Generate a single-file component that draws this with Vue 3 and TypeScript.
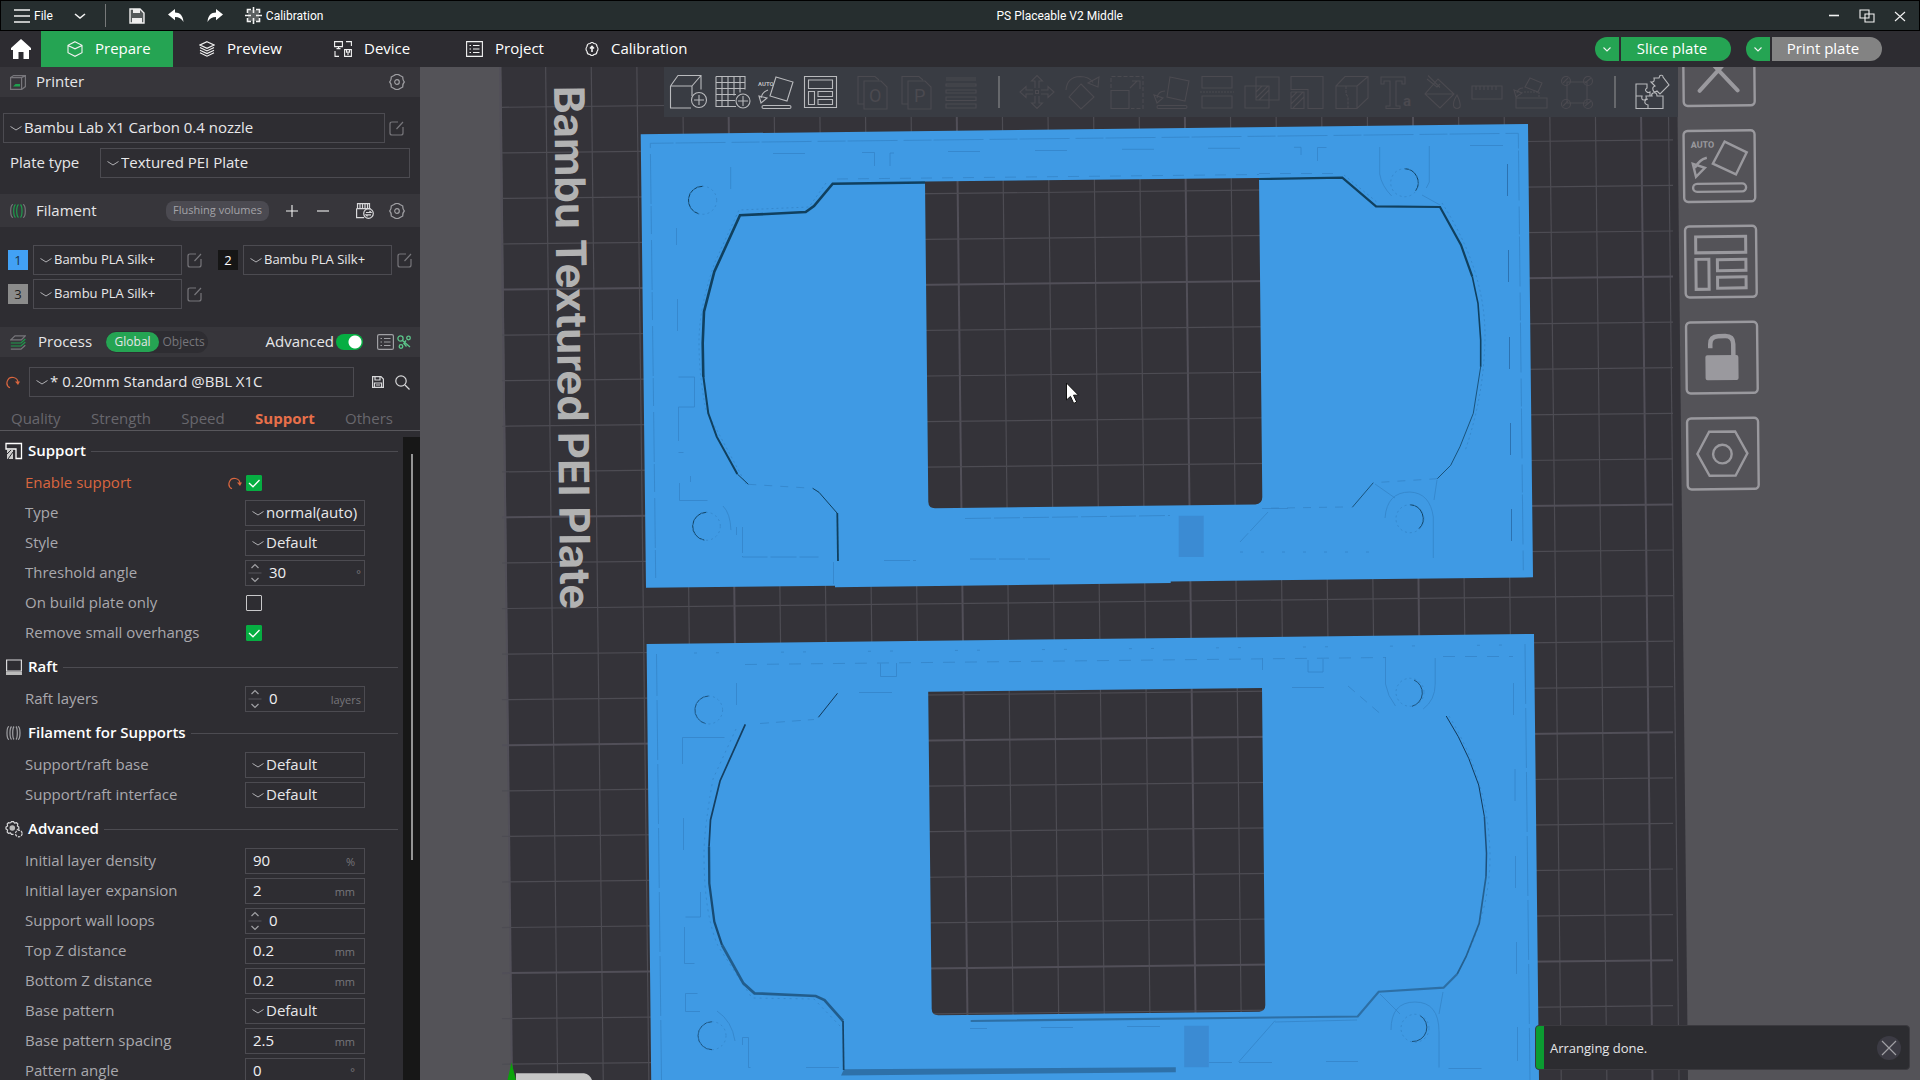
<script setup lang="ts">
import { ref } from 'vue'

interface Tab { id: string; label: string; width: number }
interface Filament { id: number; color: string; ink: string; name: string }
interface Field {
  key: string
  label: string
  kind: 'check' | 'select' | 'spin' | 'text'
  value: string
  unit?: string
  on?: boolean
  changed?: boolean
}
interface Section { id: string; title: string; fields: Field[] }

const tabs: Tab[] = [
  { id: 'prepare', label: 'Prepare', width: 132 },
  { id: 'preview', label: 'Preview', width: 135 },
  { id: 'device', label: 'Device', width: 132 },
  { id: 'project', label: 'Project', width: 119 },
  { id: 'calibration', label: 'Calibration', width: 140 },
]
const activeTab = ref('prepare')

const filaments: Filament[] = [
  { id: 1, color: '#42a1f5', ink: '#16324d', name: 'Bambu PLA Silk+' },
  { id: 2, color: '#161616', ink: '#ffffff', name: 'Bambu PLA Silk+' },
  { id: 3, color: '#8b8b8b', ink: '#1c1c1c', name: 'Bambu PLA Silk+' },
]

const pages = ['Quality', 'Strength', 'Speed', 'Support', 'Others']
const activePage = ref('Support')
const advanced = ref(true)

const sections: Section[] = [
  {
    id: 'support', title: 'Support', fields: [
      { key: 'enable', label: 'Enable support', kind: 'check', value: '', on: true, changed: true },
      { key: 'type', label: 'Type', kind: 'select', value: 'normal(auto)' },
      { key: 'style', label: 'Style', kind: 'select', value: 'Default' },
      { key: 'threshold', label: 'Threshold angle', kind: 'spin', value: '30', unit: '°' },
      { key: 'plateonly', label: 'On build plate only', kind: 'check', value: '', on: false },
      { key: 'overhangs', label: 'Remove small overhangs', kind: 'check', value: '', on: true },
    ],
  },
  {
    id: 'raft', title: 'Raft', fields: [
      { key: 'raftlayers', label: 'Raft layers', kind: 'spin', value: '0', unit: 'layers' },
    ],
  },
  {
    id: 'filament', title: 'Filament for Supports', fields: [
      { key: 'base', label: 'Support/raft base', kind: 'select', value: 'Default' },
      { key: 'interface', label: 'Support/raft interface', kind: 'select', value: 'Default' },
    ],
  },
  {
    id: 'advanced', title: 'Advanced', fields: [
      { key: 'density', label: 'Initial layer density', kind: 'text', value: '90', unit: '%' },
      { key: 'expansion', label: 'Initial layer expansion', kind: 'text', value: '2', unit: 'mm' },
      { key: 'loops', label: 'Support wall loops', kind: 'spin', value: '0' },
      { key: 'topz', label: 'Top Z distance', kind: 'text', value: '0.2', unit: 'mm' },
      { key: 'bottomz', label: 'Bottom Z distance', kind: 'text', value: '0.2', unit: 'mm' },
      { key: 'pattern', label: 'Base pattern', kind: 'select', value: 'Default' },
      { key: 'spacing', label: 'Base pattern spacing', kind: 'text', value: '2.5', unit: 'mm' },
      { key: 'angle', label: 'Pattern angle', kind: 'text', value: '0', unit: '°' },
    ],
  },
]

// Build plate grid: every fifth line is drawn stronger.
const columns = Array.from({ length: 26 }, (_, k) => ({
  k, x1: 500 + 45.62 * k, x2: 512 + 45.62 * k, strong: k % 5 === 0,
}))
const rows = Array.from({ length: 23 }, (_, n) => ({
  n, y1: 107.3 + 45.57 * n, y2: 94.3 + 45.57 * n, strong: n % 5 === 4,
}))
</script>

<template>
  <div class="app">
    <header class="titlebar">
      <div class="title-left">
        <button class="bare file">
          <svg width="16" height="14" viewBox="0 0 16 14"><path d="M0 1h16M0 7h16M0 13h16" class="ln" /></svg>
          File
        </button>
        <button class="bare drop" aria-label="Menu">
          <svg width="12" height="6" viewBox="0 0 12 6"><path d="M1 1l5 4 5-4" class="ln" /></svg>
        </button>
        <span class="title-sep"></span>
        <button class="bare save" aria-label="Save">
          <svg width="16" height="16" viewBox="0 0 16 16"><path d="M1 1h10l4 4v10H1z" fill="#555a5b" stroke="#eee" stroke-width="1.4" /><path d="M4 1h7v4H4z" fill="#eee" /><path d="M3 10h10v5H3z" fill="#eee" /></svg>
        </button>
        <button class="bare undo" aria-label="Undo">
          <svg width="16" height="14" viewBox="0 0 16 14"><path d="M0 5.500L7 0v3.500c5 0 8 3 8.500 9.500C13.500 9.500 11 8 7 8v3.200z" fill="#fff" /></svg>
        </button>
        <button class="bare redo" aria-label="Redo">
          <svg width="16" height="14" viewBox="0 0 16 14"><path d="M16 5.500L9 0v3.500c-5 0-8 3-8.500 9.500C2.500 9.500 5 8 9 8v3.200z" fill="#fff" /></svg>
        </button>
        <button class="bare calib">
          <svg width="17" height="17" viewBox="0 0 17 17"><path d="M3 3h11v11H3z" fill="#5b6061" /><path d="M6 2.500H2.500V6M11 2.500h3.500V6M6 14.500H2.500V11M11 14.500h3.500V11M8.500 0v6M8.500 11v6M0 8.500h6M11 8.500h6" class="ln" /></svg>
          Calibration
        </button>
      </div>
      <h1 class="title">PS Placeable V2 Middle</h1>
      <div class="window-buttons">
        <button class="bare" aria-label="Minimize"><svg width="16" height="16" viewBox="0 0 16 16"><path d="M3 7.500h10" class="ln" /></svg></button>
        <button class="bare" aria-label="Restore"><svg width="16" height="16" viewBox="0 0 16 16"><path d="M1 2h9v8H1zM6 6h9v8H6z" class="ln thin" /></svg></button>
        <button class="bare" aria-label="Close"><svg width="16" height="16" viewBox="0 0 16 16"><path d="M3 4l10 9M13 4L3 13" class="ln thin" /></svg></button>
      </div>
    </header>

    <nav class="tabbar">
      <button class="bare home" aria-label="Home">
        <svg width="20" height="20" viewBox="0 0 20 20"><path d="M10 0l10 9v2h-2v9h-5.500v-7h-5v7H2v-9H0V9z" fill="#fff" /></svg>
      </button>
      <button v-for="tab in tabs" :key="tab.id" class="bare tab" :class="{ active: activeTab === tab.id }" :style="{ width: tab.width + 'px' }" @click="activeTab = tab.id">
        <svg v-if="tab.id === 'prepare'" width="16" height="16" viewBox="0 0 16 16"><path d="M8 .7l7 3.600v7.400l-7 3.600-7-3.600V4.300zM1 4.500l7 3.300 7-3.300" class="ln thin" /></svg>
        <svg v-else-if="tab.id === 'preview'" width="16" height="16" viewBox="0 0 16 16"><path d="M8 .7l7 3.300-7 3.300L1 4zM1 6.600l7 3.400 7-3.400M1 9.200l7 3.400 7-3.400M1 11.800l7 3.400 7-3.400" class="ln thin" /></svg>
        <svg v-else-if="tab.id === 'device'" width="18" height="16" viewBox="0 0 18 16"><path d="M.6.6h7.800v5H.6zM2.500 7.600h4M4.500 5.600v2M12 .6h5.400V5M1 10v5.400h4M10.600 8.600h6.800v6.800h-6.800zM12.500 8.600v2.500h3V8.600M14 12v2" class="ln thin" /></svg>
        <svg v-else-if="tab.id === 'project'" width="17" height="16" viewBox="0 0 17 16"><path d="M.6.6h15.800v14.800H.6zM3.500 4.500h1.500M7 4.500h6.500M3.500 8h1.500M7 8h6.500M3.500 11.500h1.500M7 11.500h6.500" class="ln thin" /></svg>
        <svg v-else width="14" height="14" viewBox="0 0 14 14"><path d="M5 1.500Q7-.5 9 1.500q3 0 3 3 2 2.500 0 5 0 3-3 3-2 2-4 0-3 0-3-3-2-2.500 0-5 0-3 3-3z" class="ln thin" /><path d="M7 10V5M5 6.500l2-2 2 2" class="ln" /></svg>
        <span>{{ tab.label }}</span>
      </button>
      <div class="actions">
        <div class="split">
          <button class="bare split-arrow" aria-label="Slice options"><svg width="8" height="5" viewBox="0 0 8 5"><path d="M.5.5L4 4 7.500.5" class="ln thin" /></svg></button>
          <button class="bare split-main">Slice plate</button>
        </div>
        <div class="split print">
          <button class="bare split-arrow" aria-label="Print options"><svg width="8" height="5" viewBox="0 0 8 5"><path d="M.5.5L4 4 7.500.5" class="ln thin" /></svg></button>
          <button class="bare split-main">Print plate</button>
        </div>
      </div>
    </nav>

    <div class="workspace">
      <aside class="sidebar">
        <div class="head">
          <svg class="head-icon" width="16" height="15" viewBox="0 0 16 15"><path d="M.6 2.600h11v11.800H.6zM.6 2.600l3-2h11.800v11l-3.800 2.800M11.600 2.600l3.800-2" class="grey" /><path d="M3 11.500l2.500-2.500H10v2.500z" fill="#1fa04f" /></svg>
          <h2>Printer</h2>
          <button class="bare push gear-end" aria-label="Printer settings"><svg width="16" height="16" viewBox="0 0 16 16"><path d="M5 1.500Q8-.5 11 1.500L13.800 3Q13.500 6 15.300 8 13.500 10 13.800 13L11 14.500Q8 16.500 5 14.500L2.200 13Q2.500 10 .7 8 2.500 6 2.200 3z" class="grey light" /><circle cx="8" cy="8" r="2.300" class="grey light" /></svg></button>
        </div>

        <div class="printer">
          <div class="line printer-line">
            <label class="combo grow">
              <svg class="caret" width="12" height="5" viewBox="0 0 12 5"><path d="M.5.5L6 4 11.500.5" /></svg>
              <select aria-label="Printer preset"><option>Bambu Lab X1 Carbon 0.4 nozzle</option></select>
            </label>
            <button class="bare edit" aria-label="Edit preset"><svg width="15" height="15" viewBox="0 0 15 15"><path d="M9 1H3Q1 1 1 3v9q0 2 2 2h9q2 0 2-2V6M7.500 8L14 1" class="grey" /></svg></button>
          </div>
          <div class="line plate-line">
            <label class="plate-label" for="plate-type">Plate type</label>
            <div class="combo grow">
              <svg class="caret" width="12" height="5" viewBox="0 0 12 5"><path d="M.5.5L6 4 11.500.5" /></svg>
              <select id="plate-type"><option>Textured PEI Plate</option></select>
            </div>
          </div>
        </div>

        <div class="head tall">
          <svg class="head-icon" width="16" height="14" viewBox="0 0 16 14"><path d="M3 .5Q.7 1 .7 7T3 13.500M13 .5Q15.300 1 15.300 7T13 13.500" class="grey" /><path d="M5.500.5Q3.700 2 3.700 7t1.800 6.500M8.500.5Q6.700 2 6.700 7t1.800 6.500M10.500.5Q12 2 12 7t-1.500 6.500" class="green" /></svg>
          <h2>Filament</h2>
          <button class="bare flush push">Flushing volumes</button>
          <button class="bare pm plus" aria-label="Add filament"><svg width="12" height="12" viewBox="0 0 12 12"><path d="M6 0v12M0 6h12" class="ln thin" /></svg></button>
          <button class="bare pm minus" aria-label="Remove filament"><svg width="12" height="12" viewBox="0 0 12 12"><path d="M0 6h12" class="ln thin" /></svg></button>
          <button class="bare sync" aria-label="Sync filaments"><svg width="18" height="16" viewBox="0 0 18 16"><path d="M1.500.6h12v5h-12zM4 .6v5M6.500.6v5M9 .6v5M11.500.6v5M.6 5.600h14M.6 5.600v9h7.500" class="grey white" /><circle cx="12.500" cy="10.500" r="4.800" class="grey white" /><path d="M10 9.500h5l-1.500-1.500M15 11.800h-5l1.500 1.500" class="grey white" /></svg></button>
          <button class="bare gear-end" aria-label="Filament settings"><svg width="16" height="16" viewBox="0 0 16 16"><path d="M5 1.500Q8-.5 11 1.500L13.800 3Q13.500 6 15.300 8 13.500 10 13.800 13L11 14.500Q8 16.500 5 14.500L2.200 13Q2.500 10 .7 8 2.500 6 2.200 3z" class="grey light" /><circle cx="8" cy="8" r="2.300" class="grey light" /></svg></button>
        </div>

        <div class="filaments">
          <div v-for="f in filaments" :key="f.id" class="filament">
            <button class="bare chip" :style="{ background: f.color, color: f.ink }">{{ f.id }}</button>
            <label class="combo grow small">
              <svg class="caret" width="12" height="5" viewBox="0 0 12 5"><path d="M.5.5L6 4 11.500.5" /></svg>
              <select :aria-label="'Filament ' + f.id"><option>{{ f.name }}</option></select>
            </label>
            <button class="bare edit" aria-label="Edit filament"><svg width="15" height="15" viewBox="0 0 15 15"><path d="M9 1H3Q1 1 1 3v9q0 2 2 2h9q2 0 2-2V6M7.500 8L14 1" class="grey" /></svg></button>
          </div>
        </div>

        <div class="head">
          <svg class="head-icon" width="16" height="15" viewBox="0 0 16 15"><path d="M5 .8h10.300l-4 4H.8zM.8 14.200H11l4.300-4" class="grey" /><path d="M.8 8H11l4.300-4M.8 11H11l4.300-4" class="green" /></svg>
          <h2 class="process">Process</h2>
          <div class="scope">
            <button class="bare scope-on">Global</button>
            <button class="bare scope-off">Objects</button>
          </div>
          <label class="adv push"><span>Advanced</span><input v-model="advanced" type="checkbox" class="toggle" /></label>
          <button class="bare list" aria-label="Compare presets"><svg width="17" height="16" viewBox="0 0 17 16"><rect x=".6" y=".6" width="15.800" height="14.800" rx="1.500" class="grey light" /><path d="M3.500 4.500H5M7 4.500h6.500M3.500 8H5M7 8h6.500M3.500 11.500H5M7 11.500h6.500" class="grey light" /></svg></button>
          <button class="bare" aria-label="Parameters"><svg width="14" height="14" viewBox="0 0 14 14"><circle cx="3.500" cy="3.500" r="2.600" class="mint" /><circle cx="11.500" cy="3" r="1.800" class="mint" /><circle cx="4" cy="11.500" r="1.800" class="mint" /><path d="M5.500 5.500L13 12M7 8l2-2.500M9.500 11.500l-3-3.500" class="mint" /></svg></button>
        </div>

        <div class="profile">
          <button class="bare revert" aria-label="Reset"><svg width="14" height="13" viewBox="0 0 14 13"><path d="M4 11.800A5.500 5.500 0 1 1 12 7" class="warn" /><path d="M9 5.500h5L12 9z" fill="#d9663f" /></svg></button>
          <label class="combo grow">
            <svg class="caret" width="12" height="5" viewBox="0 0 12 5"><path d="M.5.5L6 4 11.500.5" /></svg>
            <select aria-label="Process preset"><option>* 0.20mm Standard @BBL X1C</option></select>
          </label>
          <button class="bare disk" aria-label="Save preset"><svg width="12" height="12" viewBox="0 0 12 12"><path d="M.6.6h8.400l2.400 2.400v8.400H.6zM3 .6v3.400h5V.6M2.500 11.400V7h7v4.400M4 9h4" class="grey white" /></svg></button>
          <button class="bare" aria-label="Search"><svg width="15" height="15" viewBox="0 0 15 15"><circle cx="6" cy="6" r="5.200" class="grey white" /><path d="M10 10l4.500 4.500" class="grey white" /></svg></button>
        </div>

        <div class="pages">
          <button v-for="p in pages" :key="p" class="bare page" :class="{ current: activePage === p }" @click="activePage = p">{{ p }}</button>
        </div>

        <div class="settings">
          <div class="fields">
            <section v-for="s in sections" :key="s.id">
              <div class="group">
                <svg v-if="s.id === 'support'" width="18" height="18" viewBox="0 0 18 18"><path d="M1 1.500h15.500v15H11V7H1z" fill="none" stroke="#fff" stroke-width="1.300" /><path d="M2 8h6v9H2z" fill="#ccc" /><path d="M2 12l4-4M3 17l5-7" stroke="#2e2d32" /></svg>
                <svg v-else-if="s.id === 'raft'" width="18" height="18" viewBox="0 0 18 18"><path d="M1.600 2h14.800v11H1.600z" class="grey white" /><path d="M1 13.500h16V17H1z" fill="#bbb" /></svg>
                <svg v-else-if="s.id === 'filament'" width="18" height="14" viewBox="0 0 18 14"><path d="M4 .5Q2 1 2 7t2 6.500M13 .5Q15 1 15 7t-2 6.500M6.500.5Q5 2 5 7t1.500 6.500M9 .5Q7.700 2 7.700 7T9 13.500M11 .5Q12.300 2 12.300 7T11 13.500" class="grey light" /></svg>
                <svg v-else width="18" height="17" viewBox="0 0 18 17"><path d="M5.500 2l1-1.400h2L9.500 2l2-.4 1.300 1.400-.4 2 1.400 1v2l-2 .5M5.500 2l-2-.4L2.200 3l.4 2L1 6v2l1.600 1-.4 2 1.300 1.300 2-.3 1 1.400h2" class="grey white" /><circle cx="7.300" cy="7" r="2.800" fill="#bbb" /><circle cx="13.800" cy="12.500" r="3.300" class="grey white" stroke-dasharray="2.500 1" /></svg>
                <h3>{{ s.title }}</h3>
                <span class="rule"></span>
              </div>
              <div v-for="f in s.fields" :key="f.key" class="field">
                <label class="name" :for="f.key" :class="{ changed: f.changed }">{{ f.label }}</label>
                <button v-if="f.changed" class="bare reset" aria-label="Reset value"><svg width="14" height="13" viewBox="0 0 14 13"><path d="M4 11.800A5.500 5.500 0 1 1 12 7" class="warn" /><path d="M9 5.500h5L12 9z" fill="#d9663f" /></svg></button>
                <div v-if="f.kind === 'check'" class="value">
                  <span class="tick">
                    <input :id="f.key" type="checkbox" :checked="f.on" />
                    <svg width="16" height="16" viewBox="0 0 16 16"><path d="M3 8l4 3.800L13.500 5" /></svg>
                  </span>
                </div>
                <div v-else-if="f.kind === 'select'" class="value combo low">
                  <svg class="caret" width="12" height="5" viewBox="0 0 12 5"><path d="M.5.5L6 4 11.500.5" /></svg>
                  <select :id="f.key"><option>{{ f.value }}</option></select>
                </div>
                <div v-else class="value box" :class="f.kind">
                  <svg v-if="f.kind === 'spin'" class="steps" width="14" height="20" viewBox="0 0 14 20"><path d="M3.500 5L7 1.500 10.500 5M3.500 15L7 18.500l3.500-3.500" class="grey light" /><path d="M.5 10h13" class="dim" /></svg>
                  <input :id="f.key" type="text" :value="f.value" />
                  <span class="unit">{{ f.unit }}</span>
                </div>
              </div>
            </section>
          </div>
          <div class="track"><div class="thumb"></div></div>
        </div>
      </aside>

      <main class="canvas">
        <svg class="scene" viewBox="420 67 1500 1013" preserveAspectRatio="xMinYMin slice">
          <path d="M501.500 67H1677l11 1013H512z" fill="#343339" />
          <g class="gridlines">
            <line v-for="c in columns" :key="'c' + c.k" :x1="c.x1" y1="67" :x2="c.x2" y2="1080" :class="{ strong: c.strong }" />
            <line x1="1668" y1="67" x2="1679" y2="1080" />
            <line v-for="r in rows" :key="'r' + r.n" x1="502" :y1="r.y1" x2="1673" :y2="r.y2" :class="{ strong: r.strong }" />
          </g>
          <text class="plate-name" transform="translate(554 86) rotate(89.300)">Bambu Textured PEI Plate</text>

          <path class="part" fill-rule="evenodd" d="M640.700 134.300L1528 124l5 453.300-362.300 4.200v1.500L835 587.200v-1.400l-189 1.900zM925 181.500L1259 178l3.300 319q0 7-7 7.400L935 508.300q-6.500 0-6.700-6.500z" />
          <path class="part" fill-rule="evenodd" d="M646.600 644L1534 634l5 446H651.200zM928.200 691.700L1262 688l3.300 317q0 6-6 6.800l-321 3.500q-6.500 0-6.600-6.500z" />

          <g class="faint">
            <path d="M655.700 578l-5.400-434.700 868-10 5 437" stroke-dasharray="28 2 50 6" />
            <path d="M773 153.500h32M862 152.500h12.500V166M890 166v-13h4M948 151.500h32M1035 150.500h32M1122 149.300h32M1208 148.300h32M1294 147.300h7V155M1317.500 161v-13.500h9M1470 145.500h33M730.700 167v22M676.500 228v17M677.500 299v32M678.500 377h16v30h-16v34M678.500 452.500h5M690.500 476v6M679.500 483v17.500h28" />
            <path d="M837 179l422-4.500M1259 173.500h82" stroke-dasharray="11 10" />
            <path d="M826 183l-17 24-70 3-24 52q-16 45-16 80t7 68l40 74M1344 175l34 28M1442 203q42 65 43 130 0 60-20 118" stroke-dasharray="2 3" />
            <path d="M748.300 484.300l64.400 4M1437.300 478.700l-64 4M1343 507l-80 1.300" stroke-dasharray="8 8" />
            <path d="M723 506q8 8 8 27M736.500 527v8M742.500 527v30h76M884 560.500h32M1262 508.500h29M1268 512l-28 30M965 518.500l205-3M970 559h80M833.500 562v22" stroke-dasharray="26 3" />
            <path d="M1240 552h145" stroke-dasharray="3 18" />
            <path d="M1379.700 147v27q2 12 12 22M1429.300 146v36l-3 6M1385 518q2-26 25-26 20 1 23.300 25V558M1437 480l-3 20M1375 484l20 14M1422 195l18 10" />
            <path d="M1507.500 164v32M1508.500 250v32M1509.500 337v32M1510.500 423v32M1511.500 509v32" class="mid" />
          </g>
          <g class="deep">
            <path d="M925 182.500l-92.300 1.200L814 206l-8.300 6-65.700 3.300-25.700 56.400L704 311.700l-1.300 31.600.6 33.400" stroke-width="2.600" />
            <path d="M703.300 376l5 37.300 8.400 23.400 20.600 37.300" stroke-width="2" />
            <path d="M737.300 474l11 10.300M812.700 488.300l6.300 4 18.300 21" stroke-width="1" />
            <path d="M837.300 513l.7 48" stroke-width="1.800" />
            <path d="M1259 179l83.300-1.300 33.700 28.600 64 .7 21 38 11.300 31.700" stroke-width="2.200" />
            <path d="M1472.300 276.700l5.700 26.600 2.700 36.700v26.700" stroke-width="1.600" />
            <path d="M1480.700 366.700l-7.400 46.600-13.300 33.400-9.300 18.600-13.400 13.400M1373.300 482.700l-21 24.600" stroke-width=".8" />
            <path d="M702.700 186.300a14 14 0 0 0-4 27.500M706.300 512.300a14 14 0 0 0-2 27.800M1404.700 168.700a14 14 0 0 1 11 22M1410 504.700a14 14 0 0 1 9 24" stroke-width="1" />
          </g>
          <g class="faint">
            <circle cx="702.700" cy="200.300" r="14" stroke-dasharray="2 3" /><circle cx="706.300" cy="526.300" r="14" stroke-dasharray="2 3" />
            <circle cx="1404.700" cy="182.700" r="14" stroke-dasharray="2 3" /><circle cx="1410" cy="518.700" r="14" stroke-dasharray="2 3" />
          </g>
          <path d="M1178.700 515.700h25V557h-25z" class="shade" />

          <g class="faint">
            <path d="M661.500 1080l-5-426M1525 644l5 436" stroke-dasharray="60 4" />
            <path d="M694 653l812-8" stroke-dasharray="3 19 3 62" />
            <path d="M745 664.500l641-7M1443 656.500h70" stroke-dasharray="12 10" />
            <path d="M880.500 663.500V676.500h16V663M859 692.500h33M736.500 683v22M682.500 764v-26.500h42M683.500 818v32M700.500 892v25h-15M684.500 927v36.500h10M700 1011.500h-14.500v-18h12M1292 687.500h32M1308 660v12h15v-13M1262.500 658v12M1385.500 657v27q2 12 10 22M1435.200 658v26q0 16-12 25M1513.500 683v32M1515 769v32M1515.500 856v32M1516.500 942v32M1517.500 1027v34" />
            <path d="M736 729l-23 50q-9 50-9 75 0 60 14 92l34 52 62 1 26 27M1449 716q40 65 41 140 0 60-32 116" stroke-dasharray="2 4" />
            <path d="M760 723.500l54-4M1348 686l35 30" stroke-dasharray="9 7" />
            <path d="M717 1011q15 10 18 30M742.500 1045v-7.500h6v30h2M806 1067.500h33M970 1028.500h17M1041 1027.500h32M1127 1026.500h33M1275 1020.700l-36.400 41.300M1275 1022l82-2M1209 1062.500h23M1239 1062.500h33M1326 1061.500h32M1448.500 1068.500h33M1391 1030q0-28 24-28t24 30v35.500M1443 992l-4 22M1380 994l20 20" />
          </g>
          <g class="low-edge">
            <path d="M844 1069.300l331.800-2v5L841 1075.500z" fill="#2e71a9" stroke="none" />
            <path d="M970.700 1021l387-4.500 21-24.800 64.900-4 13.600-13.700" stroke="#2d6fa5" stroke-width="2.200" />
            <path d="M1457.200 974l8.800-17.300 13.200-33.400 6.800-46.600" stroke="#25608f" stroke-width="1.700" />
            <path d="M1486 876.700l.5-23.400-2.100-36.600" stroke="#1d4f7a" stroke-width="1.500" />
            <path d="M1484.400 816.700l-5.700-31.700-10-26.700-10.400-21.600-12.100-20.700M837.500 693.300l-19.100 24" stroke="#12395a" stroke-width="1" />
            <path d="M745.300 724.300L720 781l-9.500 39-1.500 26.700" stroke="#153f61" stroke-width="1.700" />
            <path d="M709 846.700l.3 36.600 5 38.400 7.700 23.300" stroke="#184b73" stroke-width="2.300" />
            <path d="M722 945l21.400 38.300 11.100 10 61.200 2.700 8.800 4 18.500 21" stroke="#225d8c" stroke-width="2.700" />
            <path d="M843 1021l.7 49" stroke="#164366" stroke-width="1.700" />
            <path d="M708.600 696a14 14 0 0 0-3 27.600M712 1021.700a14 14 0 0 0 0 28M1414 680a14 14 0 0 1-2 26.300M1420 1015.500a14 14 0 0 1-8 26" stroke="#1b5079" stroke-width="1" />
          </g>
          <g class="faint">
            <circle cx="708.600" cy="710" r="14" stroke-dasharray="2 3" /><circle cx="712" cy="1035.700" r="14" stroke-dasharray="2 3" />
            <circle cx="1410" cy="692.300" r="14" stroke-dasharray="2 3" /><circle cx="1415" cy="1028.300" r="14" stroke-dasharray="2 3" />
          </g>
          <path d="M1184.200 1025.700h24.600v41.600h-24.600z" class="shade" />

          <path d="M516 1080v-6.700h68q6 1 8 6.700z" fill="#c6c6c6" />
          <path d="M507.500 1080l4-17.500 4.500 17.500z" fill="#0aa30a" />

          <g class="plate-icons">
            <g transform="translate(1682 34) rotate(-.6)"><rect x="1" y="1" width="71" height="71" rx="4" /><path d="M17 16l38 41M55 16L17 57" stroke-width="4" stroke-linecap="round" /></g>
            <g transform="translate(1682.500 130) rotate(-.6)"><rect x="1" y="1" width="71" height="71" rx="4" /><path d="M42 12l22 11-11 22-23-11zM24 28q-8 2-12 10M10 34l3 13 9-9z" /><rect x="10" y="54" width="53" height="8" rx="4" /><text x="8" y="18">AUTO</text></g>
            <g transform="translate(1684 225.500) rotate(-.6)"><rect x="1" y="1" width="71" height="71" rx="4" /><g stroke-width="3"><rect x="11.500" y="11.500" width="50" height="16" /><rect x="11.500" y="34" width="13" height="30" /><rect x="33" y="34.500" width="28.500" height="11" /><rect x="33" y="52" width="28.500" height="11" /></g></g>
            <g transform="translate(1685 321.500) rotate(-.6)"><rect x="1" y="1" width="71" height="71" rx="4" /><rect x="20" y="34" width="33" height="25" rx="2" fill="#9a999e" stroke="none" /><path d="M25 27v-4q0-8 8-8h7q8 0 8 8v12" stroke-width="4.500" /></g>
            <g transform="translate(1686 417.500) rotate(-.6)"><rect x="1" y="1" width="71" height="71" rx="4" /><path d="M23 14.500h26l12 22-12 22H23l-12-22z" /><circle cx="36" cy="37" r="9.300" /></g>
          </g>
          <path d="M1066.500 383v17l4-3.600 3.200 7 3-1.400-3.200-6.800h5z" fill="#fff" stroke="#111" stroke-width="1" />
        </svg>

        <div class="toolbar">
          <button class="bare tool" aria-label="Add"><svg viewBox="0 0 38 36"><path d="M1.500 12L9 1.500h23v14M1.500 12v22H22M1.500 12H23v10M23 12l9-10.500" /><circle cx="30" cy="26" r="7.500" /><path d="M30 21v10M25 26h10" /></svg></button>
          <button class="bare tool" aria-label="Add plate"><svg viewBox="0 0 38 36"><path d="M3 2.500h29v13M3 2.500v30h20M9 2.500v30M15 2.500v30M21 2.500v19M27 2.500v16M3 8.500h29M3 14.500h29M3 20.500h20M3 26.500h19" /><circle cx="30" cy="27" r="7" /><path d="M30 22v10M25 27h10" /></svg></button>
          <button class="bare tool" aria-label="Auto orient"><svg viewBox="0 0 38 36"><path d="M19 3l17 5-6 19-17-5zM11 16q-6 2-7 8M2 22l2 7 6-5z" /><rect x="5" y="31.500" width="29" height="3" rx="1.500" /><text x="1" y="12">AUTO</text></svg></button>
          <button class="bare tool" aria-label="Arrange"><svg viewBox="0 0 38 36"><path d="M3.500 2.500h32v31h-32zM7.500 6h24v8.500h-24zM7.500 17.500h6v13h-6zM17 17.500h14.500v5H17zM17 25.500h14.500v5H17z" /></svg></button>
          <button class="bare tool off first-off" aria-label="Split to objects"><svg viewBox="0 0 38 36"><path d="M10 30H4V2.500h17L25 6M10 7h17l6 6v22H10z" /><text x="15" y="28" class="big">O</text></svg></button>
          <button class="bare tool off" aria-label="Split to parts"><svg viewBox="0 0 38 36"><path d="M10 30H4V2.500h17L25 6M10 7h17l6 6v22H10z" /><text x="16" y="28" class="big">P</text></svg></button>
          <button class="bare tool off" aria-label="Variable layer height"><svg viewBox="0 0 38 36"><path d="M4 4h30M4 6h30M4 10h30v2H4zM4 16h30v3H4zM4 23h30v3.500H4zM4 30h30v4H4z" /></svg></button>
          <span class="tool-sep"></span>
          <button class="bare tool off" aria-label="Move"><svg viewBox="0 0 38 36"><path d="M17 14V7h-3.500L19 1.500 24.500 7H21v7M17 22v7h-3.500l5.500 5.500 5.500-5.500H21v-7M15 16H8v-3.500L2 18l6 5.500V20h7M23 16h7v-3.500l6 5.500-6 5.500V20h-7M17.500 16.500h3v3h-3z" /></svg></button>
          <button class="bare tool off" aria-label="Rotate"><svg viewBox="0 0 38 36"><path d="M18 10l13 13-13 12L6 23zM3 16Q4 3 17 2.500q9 0 13 6M25 9l10 4 1-10z" /></svg></button>
          <button class="bare tool off" aria-label="Scale"><svg viewBox="0 0 38 36"><path d="M3 16.500h18v18H3z" /><path d="M3 14V2.500h32v32H23" stroke-dasharray="4 2" /><path d="M22 14l7-7M24 7h8v8" /></svg></button>
          <button class="bare tool off" aria-label="Lay on face"><svg viewBox="0 0 38 36"><path d="M17 3l19 4-4 20-18-4zM12 17q-7 0-8 7M1 21l3 8 6-5z" /><rect x="4" y="31.500" width="30" height="3" rx="1.500" /></svg></button>
          <button class="bare tool off" aria-label="Cut"><svg viewBox="0 0 38 36"><path d="M4 14V2.500h30V14zM4 22v12h30V22z" /><path d="M2 18h34" stroke-dasharray="2 1" /></svg></button>
          <button class="bare tool off" aria-label="Boolean"><svg viewBox="0 0 38 36"><path d="M13 3h23v23H13zM2 12h24v22H2zM13 18l6-6M13 24l12-12M16 26L26 16" /></svg></button>
          <button class="bare tool off" aria-label="Support painting"><svg viewBox="0 0 38 36"><path d="M3 2.500h32v32H20v-19H3zM3 18h13v16.500H3V18M3 24l6-6M3 30L15 18M5 34l11-11" /></svg></button>
          <button class="bare tool off" aria-label="Seam painting"><svg viewBox="0 0 38 36"><path d="M3 12L12 2.500h23V24L24 34.500H3zM3 12h21v22.500M24 12L35 2.500" /><path d="M13 12v8l2 3v11" stroke-dasharray="3 1" /></svg></button>
          <button class="bare tool off" aria-label="Text"><svg viewBox="0 0 38 36"><path d="M3 3h24v7h-3V7h-6v25h4v2.500H8V32h4V7H6v3H3z" /><text x="25" y="32" class="bold">a</text></svg></button>
          <button class="bare tool off" aria-label="Color painting"><svg viewBox="0 0 38 36"><path d="M15 5L2 20l15 14 14-14zM2 20h29M5 1.500l12 12M4 5l10 8 3-3M34 21q-5 8-3 12 3 3 6 0 1-4-3-12z" /></svg></button>
          <button class="bare tool off" aria-label="Measure"><svg viewBox="0 0 38 36"><path d="M4 12h30v13H4zM8 12v4M12 12v4M16 12v4M20 12v4M24 12v4M28 12v4" /></svg></button>
          <button class="bare tool off" aria-label="Assembly"><svg viewBox="0 0 38 36"><path d="M3 24h31v10H3zM17 4l12 5-4 9-13-5zM10 14q-5 0-6 5M1 16l2 7 6-4z" /><path d="M11 18h15v6" stroke-dasharray="2 1" /></svg></button>
          <button class="bare tool off" aria-label="Brim ears"><svg viewBox="0 0 38 36"><path d="M9 8h20v21H9z" /><circle cx="8" cy="7" r="4.500" /><circle cx="30" cy="7" r="4.500" /><circle cx="8" cy="30" r="4.500" /><circle cx="30" cy="30" r="4.500" /><path d="M5 9l5-5M27 9l6-5M5 32l5-5M27 32l6-5" /></svg></button>
          <span class="tool-sep"></span>
          <button class="bare tool" aria-label="Assembly view"><svg viewBox="0 0 38 36"><path d="M3 10h11v4q-3 2 0 4 1 1 3 0v4h-4q1 4-2 4t-2-4H3zM3 22v12.500h12V31q-4-1-3-4 1-2 3-2M15 34.500h15V22h-6q0-4-4-3-2 1-1 3h-2M19 8q3 0 2-4l5 0 1-2.500q3-1 3 1.500l6 8-9 9-3-3q-3 2-4-1-1-3 2-4l-4-4z" /></svg></button>
        </div>

        <div class="toast" role="status">
          <span class="toast-bar"></span>
          <span class="toast-text">Arranging done.</span>
          <button class="bare toast-close" aria-label="Dismiss"><svg width="16" height="16" viewBox="0 0 16 16"><path d="M1 1l14 14M15 1L1 15" class="grey light" /></svg></button>
        </div>
      </main>
    </div>
  </div>
</template>

<style>
body { margin: 0; background: #2e2d32; }
</style>

<style scoped>
* { box-sizing: border-box; }
.app {
  display: flex;
  flex-direction: column;
  height: 100vh;
  overflow: hidden;
  background: #2e2d32;
  color: #e6e6e8;
  font: 15px/20px "Open Sans", "Noto Sans", sans-serif;
}
.bare {
  display: flex;
  flex: none;
  align-items: center;
  justify-content: center;
  padding: 0;
  border: 0;
  background: none;
  color: inherit;
  font: inherit;
}
svg { flex: none; }
.ln { fill: none; stroke: #f2f2f2; stroke-width: 1.6; }
.thin { stroke-width: 1.1; }
.grey { fill: none; stroke: #77767b; stroke-width: 1.2; }
.light { stroke: #a0a0a4; }
.white { stroke: #d8d8da; }
.green { fill: none; stroke: #1e9b4c; stroke-width: 1.2; }
.mint { fill: none; stroke: #5cc58a; stroke-width: 1.3; }
.warn { fill: none; stroke: #d9663f; stroke-width: 1.2; }
.dim { fill: none; stroke: #55545a; }

.titlebar {
  display: flex;
  flex: none;
  align-items: center;
  height: 31px;
  border: 1px solid #000;
  background: #262e2f;
  color: #fff;
  font: 12px/16px Roboto, sans-serif;
}
.title-left { display: flex; align-items: center; padding-left: 13px; }
.file { gap: 4px; }
.drop { margin-left: 21px; }
.title-sep { width: 1px; height: 23px; margin: 0 23px 0 19px; background: #77797a; }
.undo, .redo { margin-left: 23px; }
.calib { gap: 4px; margin-left: 22px; }
.title { flex: 1; margin: 0; font: inherit; text-align: center; }
.window-buttons { display: flex; gap: 17px; padding: 0 11px 0 30px; }

.tabbar { display: flex; flex: none; height: 36px; background: #2d2c31; color: #fff; }
.home { width: 41px; }
.tab { justify-content: flex-start; gap: 12px; padding-left: 26px; }
.tab span { padding-bottom: 2px; }
.tab.active { background: #25a453; }
.actions { display: flex; align-items: center; gap: 15px; margin-left: auto; padding-right: 38px; }
.split { display: flex; gap: 2px; }
.split .bare { height: 24px; background: #25a453; }
.split-arrow { width: 24px; border-radius: 12px 0 0 12px; }
.split .split-main { width: 110px; padding: 0 8px 2px 0; border-radius: 0 12px 12px 0; }
.print .split-main { background: #838383; }

.workspace { display: flex; flex: 1; min-height: 0; }
.sidebar { display: flex; flex: none; flex-direction: column; width: 420px; min-height: 0; }
.head { display: flex; flex: none; align-items: center; height: 30px; padding: 0 9px 0 10px; background: #37363b; }
.head.tall { height: 33px; }
.head h2 { margin: 0 0 0 10px; padding-bottom: 2px; font: inherit; }
.push { margin-left: auto; }
.gear-end { margin-right: 6px; }
.printer { padding: 16px 0; }
.line { display: flex; align-items: center; }
.printer-line { gap: 4px; padding: 0 16px 0 3px; }
.plate-line { margin-top: 5px; padding: 0 10px; }
.plate-label { width: 90px; padding-bottom: 2px; }
.combo { position: relative; display: flex; height: 30px; border: 1px solid #4c4b51; }
.grow { flex: 1; }
.combo select {
  flex: 1;
  min-width: 0;
  padding: 0 0 2px 20px;
  border: 0;
  appearance: none;
  background: none;
  color: #e8e8ea;
  font: inherit;
}
.combo option { background: #2e2d32; }
.caret { position: absolute; top: 50%; left: 6px; margin-top: -2px; fill: none; stroke: #b0b0b4; pointer-events: none; }
.small { font-size: 13px; }
.edit { width: 15px; }

.flush { width: 103px; height: 20px; padding-bottom: 1px; border-radius: 8px; background: #4b4a51; color: #a3a3a8; font-size: 11px; }
.plus { margin-left: 17px; }
.minus { margin-left: 19px; }
.sync { margin: 0 15px 0 27px; }
.filaments { display: grid; grid-template-columns: 194px 194px; gap: 4px 16px; padding: 18px 8px; }
.filament { display: flex; align-items: center; gap: 5px; }
.chip { width: 20px; height: 20px; font-size: 13px; }

.head .process { margin-left: 12px; }
.scope { display: flex; align-items: center; height: 22px; margin-left: 14px; border-radius: 11px; background: #2e2d32; font-size: 12px; }
.scope-on { width: 53px; height: 20px; border-radius: 10px; background: #25a453; }
.scope-off { width: 49px; color: #77767b; }
.adv { display: flex; align-items: center; gap: 2px; }
.adv span { padding-bottom: 2px; }
.toggle {
  width: 27px;
  height: 16px;
  margin: 0;
  border-radius: 8px;
  appearance: none;
  background: radial-gradient(circle at 19px 8px, #fff 6px, #06ae42 7px);
}
.list { margin: 0 3px 0 14px; }

.profile { display: flex; flex: none; align-items: center; padding: 10px 10px 10px 6px; }
.revert { margin-right: 9px; }
.disk { margin: 0 11px 0 18px; }
.pages {
  display: flex;
  flex: none;
  justify-content: space-between;
  height: 24px;
  padding: 0 27px 2px 11px;
  border-bottom: 1px solid #58575c;
}
.page { color: #68676d; }
.current { color: #e8704a; font-weight: 700; }

.settings { display: flex; flex: 1; min-height: 0; padding-top: 1px; overflow: hidden; }
.fields { flex: 1; min-height: 0; overflow: hidden; }
.group { display: flex; align-items: center; gap: 5px; height: 36px; padding: 2px 5px 0; }
.group h3 { margin: 0; padding-bottom: 2px; color: #fff; font: inherit; font-weight: 600; }
.rule { flex: 1; height: 1px; background: #4c4b51; }
.field { position: relative; display: flex; align-items: center; height: 30px; padding: 0 38px 0 25px; color: #a9a8ad; }
.name { padding-bottom: 2px; }
.changed { color: #d9663f; }
.reset { margin-left: auto; margin-right: 3px; }
.value { width: 120px; margin-left: auto; color: #f0f0f2; }
.reset + .value { margin-left: 0; }
.low { height: 26px; }
.tick { position: relative; display: block; width: 16px; height: 16px; margin-left: 1px; }
.tick input { display: block; width: 16px; height: 16px; margin: 0; border: 1px solid #c8c8ca; border-radius: 1px; appearance: none; }
.tick input:checked { border-color: #06ae42; background: #06ae42; }
.tick svg { position: absolute; inset: 0; fill: none; stroke: none; pointer-events: none; }
.tick input:checked + svg { stroke: #fff; stroke-width: 1.3; }
.box { display: flex; align-items: center; height: 26px; padding: 0 9px 0 7px; border: 1px solid #4c4b51; }
.box input { flex: 1; min-width: 0; padding: 0 0 2px; border: 0; outline: 0; background: none; color: inherit; font: inherit; }
.unit { padding-top: 1px; color: #77767b; font-size: 11px; }
.spin { padding: 0 3px 0 2px; }
.steps { margin-right: 7px; }
.track { display: flex; justify-content: flex-end; width: 17px; margin-top: 5px; padding: 17px 7px 0 0; background: #171717; }
.thumb { width: 2px; height: 406px; background: #959595; }

.canvas { position: relative; flex: 1; min-width: 0; overflow: hidden; background: #545358; }
.scene { display: block; width: 100%; height: 100%; }
.gridlines line { stroke: #4d4c53; stroke-width: 1.2; }
.gridlines .strong { stroke: #514f58; stroke-width: 2; }
.plate-name { fill: #b2b2b2; font: 700 42px Inter, sans-serif; }
.part { fill: #3f9ae4; }
.faint { fill: none; stroke: #3484c8; stroke-width: .8; }
.mid { stroke: #2768a3; }
.deep { fill: none; stroke: #10405f; }
.low-edge { fill: none; }
.shade { fill: #3b8bd3; }
.plate-icons { fill: none; stroke: #9a999e; stroke-width: 2.4; }
.plate-icons text { fill: #9a999e; stroke: none; font: 700 9px Roboto, sans-serif; }

.toolbar { position: absolute; top: 0; left: 244px; display: flex; align-items: center; height: 50px; padding: 0 4px 0 2px; background: #393c43; }
.tool { width: 44px; height: 50px; }
.tool svg { width: 38px; height: 36px; overflow: visible; fill: none; stroke: #b9babd; stroke-width: 1.1; }
.tool text { fill: #b9babd; stroke: none; font: 700 6px Roboto, sans-serif; }
.off svg { stroke: #4b4a50; }
.off text { fill: #4b4a50; }
.off .big { font: 18px Roboto, sans-serif; }
.off .bold { font: 700 15px Roboto, sans-serif; }
.first-off { margin-left: 9px; }
.off ~ .tool-sep ~ .off { width: 45px; }
.tool-sep { width: 2px; height: 32px; margin: 0 14px 0 15px; background: #66686c; }

.toast {
  position: absolute;
  right: 10px;
  bottom: 10px;
  display: flex;
  align-items: center;
  width: 375px;
  height: 45px;
  padding-right: 8px;
  overflow: hidden;
  border: 1px solid #3b3a3f;
  border-radius: 4px;
  background: #2c2c30;
  font-size: 13px;
}
.toast-bar { width: 8px; height: 45px; margin-right: 6px; background: #0b9c31; }
.toast-close { width: 24px; height: 24px; margin-left: auto; border-radius: 12px; background: #3c3b44; }
</style>
